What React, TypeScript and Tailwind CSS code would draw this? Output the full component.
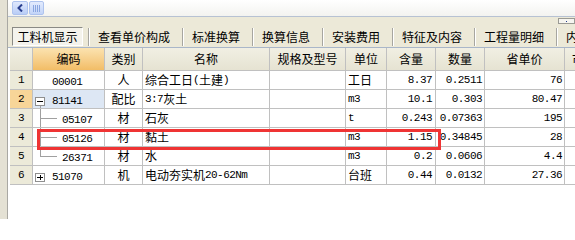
import React from "react";

const cols = [23, 72, 38, 127, 76, 41, 49, 49, 80];

const headers = ["", "编码", "类别", "名称", "规格及型号", "单位", "含量", "数量", "省单价"];

type Row = {
  no: string;
  code: string;
  kind: string;
  name: string;
  unit: string;
  qty: string;
  amount: string;
  price: string;
  tree: "plain" | "minus" | "plus" | "child" | "last";
};

const rows: Row[] = [
  { no: "1", code: "00001", kind: "人", name: "综合工日(土建)", unit: "工日", qty: "8.37", amount: "0.2511", price: "76", tree: "plain" },
  { no: "2", code: "81141", kind: "配比", name: "3:7灰土", unit: "m3", qty: "10.1", amount: "0.303", price: "80.47", tree: "minus" },
  { no: "3", code: "05107", kind: "材", name: "石灰", unit: "t", qty: "0.243", amount: "0.07363", price: "195", tree: "child" },
  { no: "4", code: "05126", kind: "材", name: "黏土", unit: "m3", qty: "1.15", amount: "0.34845", price: "28", tree: "child" },
  { no: "5", code: "26371", kind: "材", name: "水", unit: "m3", qty: "0.2", amount: "0.0606", price: "4.4", tree: "last" },
  { no: "6", code: "51070", kind: "机", name: "电动夯实机20-62Nm", unit: "台班", qty: "0.44", amount: "0.0132", price: "27.36", tree: "plus" },
];

const tabs = ["查看单价构成", "标准换算", "换算信息", "安装费用", "特征及内容", "工程量明细", "内容"];

// ascii runs get the narrow mono font, like the half-width glyphs of the original
function T({ text }: { text: string }) {
  const parts = text.match(/[\x20-\x7e]+|[^\x20-\x7e]+/g) ?? [];
  return (
    <>
      {parts.map((p, i) =>
        /^[\x20-\x7e]+$/.test(p) ? (
          <span key={i} className="font-['Liberation_Mono'] text-[11px] tracking-[-0.55px]">
            {p}
          </span>
        ) : (
          <span key={i}>{p}</span>
        ),
      )}
    </>
  );
}

function TreeBox({ sign }: { sign: "minus" | "plus" }) {
  return (
    <span className="absolute left-[2px] top-[7px] flex h-[9px] w-[10px] items-center justify-center border border-[#8f8f8f] bg-white">
      <span className="absolute h-px w-[6px] bg-black" />
      {sign === "plus" && <span className="absolute h-[5px] w-px bg-black" />}
    </span>
  );
}

function CodeCell({ row }: { row: Row }) {
  const isChild = row.tree === "child" || row.tree === "last";
  return (
    <div
      className={`relative h-full shrink-0 border-r border-[#c0c0c0] ${
        row.tree === "minus" ? "bg-[#dde7f4]" : ""
      }`}
      style={{ width: cols[1] }}
    >
      {(row.tree === "minus" || row.tree === "plus") && <TreeBox sign={row.tree} />}
      {row.tree === "minus" && (
        <span className="absolute left-[7px] top-[16px] bottom-0 w-px bg-[#a0a0a0]" />
      )}
      {isChild && (
        <>
          <span
            className={`absolute left-[7px] top-0 w-px bg-[#a0a0a0] ${
              row.tree === "last" ? "h-[9px]" : "h-full"
            }`}
          />
          <span className="absolute left-[7px] top-[9px] h-px w-[17px] bg-[#a0a0a0]" />
        </>
      )}
      <span className={`absolute top-0 leading-[18px] ${isChild ? "left-[29px]" : "left-[19px]"}`}>
        <T text={row.code} />
      </span>
    </div>
  );
}

export default function App() {
  return (
    <div className="relative flex h-[219px] w-[575px] overflow-hidden bg-white font-['Noto_Sans_CJK_SC',sans-serif] text-[12px] text-black">
      {/* left splitter strip */}
      <div className="h-full w-[8px] shrink-0 border-r border-[#a9a8a3] bg-[#e4e1d4]" />

      <div className="flex min-w-0 flex-1 flex-col">
        {/* horizontal scroller */}
        <div className="flex h-[17px] shrink-0 items-start gap-px border-b border-[#b7c2d3] bg-gradient-to-b from-white to-[#f3f3f0] pl-[4px] pt-px">
          <div className="flex h-[14px] w-[16px] items-center justify-center rounded-[2px] border border-[#aec3ee] bg-gradient-to-b from-[#dfe8fd] to-[#b9cdf6]">
            <svg width="7" height="8" viewBox="0 0 7 8">
              <path d="M5 0.5 L1.5 4 L5 7.5" fill="none" stroke="#2a3f8f" strokeWidth="2" />
            </svg>
          </div>
          <div className="flex h-[14px] w-[15px] items-center justify-center gap-px rounded-[2px] border border-[#aec3ee] bg-gradient-to-b from-[#e3ebfd] to-[#c2d4f8]">
            {[0, 1, 2, 3].map((i) => (
              <span key={i} className="h-[7px] w-px bg-[#8aa6e0]" />
            ))}
          </div>
        </div>

        {/* toolbar tabs */}
        <div className="relative flex h-[31px] shrink-0 items-end overflow-hidden border-b border-[#a9b6c9] bg-[#ece9d8] pb-px pl-[4px]">
          <div className="flex h-[19px] w-[71px] shrink-0 items-center justify-center whitespace-nowrap border border-t-[#8a8a85] border-l-[#8a8a85] border-r-white border-b-white bg-[#f4f3ec]">
            工料机显示
          </div>
          <div className="ml-[5px] flex h-[18px] w-[2px] shrink-0 border-l border-[#a7a6a0] border-r border-r-white" />
          {tabs.map((t, i) => (
            <React.Fragment key={t}>
              <div className="flex h-[19px] shrink-0 items-center whitespace-nowrap pl-[8px] pr-[12px]">
                {t}
              </div>
              {i < tabs.length - 1 && (
                <div className="flex h-[18px] w-[2px] shrink-0 border-l border-[#a7a6a0] border-r border-r-white" />
              )}
            </React.Fragment>
          ))}
          <div className="absolute right-0 top-[1px] flex h-[6px] w-[17px] items-center justify-center border border-[#9a9a94] bg-[#f6f5f0]">
            <span className="h-px w-px bg-[#203a8a]" />
          </div>
        </div>

        {/* grid */}
        <div className="relative ml-[2px] flex flex-col">
          <div className="flex h-[23px] shrink-0 border-b border-[#c0c0c0] bg-gradient-to-b from-[#f1efe3] to-[#e6e3d2]">
            {headers.map((h, i) => (
              <div
                key={i}
                className={`flex h-full shrink-0 items-center justify-center border-r border-[#c0c0c0] ${
                  i === 1 ? "bg-gradient-to-b from-[#fbe3b0] to-[#f2bd66]" : ""
                }`}
                style={{ width: cols[i] }}
              >
                {h}
              </div>
            ))}
            <div className="flex-1 overflow-hidden whitespace-nowrap pl-[7px] leading-[22px]">市单价</div>
          </div>

          {rows.map((r) => (
            <div key={r.no} className="flex h-[19px] shrink-0 border-b border-[#c0c0c0]">
              <div
                className={`flex h-full shrink-0 items-center justify-center border-r border-[#c0c0c0] ${
                  r.tree === "minus" ? "bg-[#f7d598]" : "bg-[#ecead9]"
                }`}
                style={{ width: cols[0] }}
              >
                <T text={r.no} />
              </div>
              <CodeCell row={r} />
              <div className="flex h-full shrink-0 items-center justify-center border-r border-[#c0c0c0]" style={{ width: cols[2] }}>
                {r.kind}
              </div>
              <div className="flex h-full shrink-0 items-center whitespace-nowrap border-r border-[#c0c0c0] pl-[2px]" style={{ width: cols[3] }}>
                <T text={r.name} />
              </div>
              <div className="h-full shrink-0 border-r border-[#c0c0c0]" style={{ width: cols[4] }} />
              <div className="flex h-full shrink-0 items-center border-r border-[#c0c0c0] pl-[2px]" style={{ width: cols[5] }}>
                <T text={r.unit} />
              </div>
              <div className="flex h-full shrink-0 items-center justify-end border-r border-[#c0c0c0] pr-[3px]" style={{ width: cols[6] }}>
                <T text={r.qty} />
              </div>
              <div className="flex h-full shrink-0 items-center justify-end border-r border-[#c0c0c0] pr-[2px]" style={{ width: cols[7] }}>
                <T text={r.amount} />
              </div>
              <div className="flex h-full shrink-0 items-center justify-end border-r border-[#c0c0c0] pr-[2px]" style={{ width: cols[8] }}>
                <T text={r.price} />
              </div>
              <div className="flex-1" />
            </div>
          ))}

          {/* red highlight box drawn over row 4 */}
          <div className="pointer-events-none absolute left-[27px] top-[81px] h-[21px] w-[404px] border-[3px] border-[#ef3434]" />
        </div>
      </div>
    </div>
  );
}
